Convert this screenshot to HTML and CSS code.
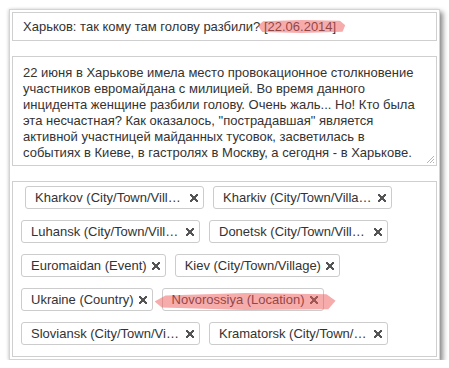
FILE: index.html
```html
<!DOCTYPE html>
<html lang="ru">
<head>
    <meta charset="UTF-8">
    <meta name="viewport" content="width=device-width, initial-scale=1.0">
    <title>Харьков: так кому там голову разбили?</title>
    <link rel="stylesheet" href="styles.css">
</head>
<body>
    <div class="panel">
        <div class="field title-field">
            Харьков: так кому там голову разбили? <span class="marked">[22.06.2014]</span>
        </div>

        <div class="field text-field">
            22 июня в Харькове имела место провокационное столкновение<br>
            участников евромайдана с милицией. Во время данного<br>
            инцидента женщине разбили голову. Очень жаль... Но! Кто была<br>
            эта несчастная? Как оказалось, "пострадавшая" является<br>
            активной участницей майданных тусовок, засветилась в<br>
            событиях в Киеве, в гастролях в Москву, а сегодня - в Харькове.
            <svg class="grip" width="9" height="9" viewBox="0 0 9 9">
                <path d="M8 1 L1 8 M8 4 L4 8 M8 7 L7 8" stroke="#b5b5b5" stroke-width="1"/>
            </svg>
        </div>

        <div class="field tags">
            <div class="tag-row first">
                <span class="tag"><span class="label">Kharkov (City/Town/Village)</span><i class="x"></i></span>
                <span class="tag"><span class="label">Kharkiv (City/Town/Village)</span><i class="x"></i></span>
            </div>
            <div class="tag-row">
                <span class="tag"><span class="label">Luhansk (City/Town/Village)</span><i class="x"></i></span>
                <span class="tag"><span class="label">Donetsk (City/Town/Village)</span><i class="x"></i></span>
            </div>
            <div class="tag-row">
                <span class="tag"><span class="label">Euromaidan (Event)</span><i class="x"></i></span>
                <span class="tag"><span class="label">Kiev (City/Town/Village)</span><i class="x"></i></span>
            </div>
            <div class="tag-row">
                <span class="tag"><span class="label">Ukraine (Country)</span><i class="x"></i></span>
                <span class="tag marked-tag"><span class="label">Novorossiya (Location)</span><i class="x"></i></span>
            </div>
            <div class="tag-row">
                <span class="tag"><span class="label">Sloviansk (City/Town/Village)</span><i class="x"></i></span>
                <span class="tag"><span class="label">Kramatorsk (City/Town/Village)</span><i class="x"></i></span>
            </div>
        </div>
    </div>
</body>
</html>
```

FILE: styles.css
```css
* {
    margin: 0;
    padding: 0;
    box-sizing: border-box;
}

body {
    font-family: 'Liberation Sans', Arial, sans-serif;
    background: #ffffff;
    color: #333333;
}

.panel {
    width: 431px;
    margin: 9px 0 0 9px;
    padding: 2px;
    background: #ffffff;
    border: 1px solid #d4d4d4;
    box-shadow: 3px 3px 5px rgba(0, 0, 0, 0.45), -1px 0 3px rgba(0, 0, 0, 0.12);
    display: flex;
    flex-direction: column;
    gap: 15px;
}

.field {
    border: 1px solid #cfcfcf;
    font-size: 13px;
}

.title-field {
    height: 29px;
    line-height: 27px;
    padding: 0 10px;
    white-space: nowrap;
}

.marked {
    position: relative;
}

.marked::before {
    content: "";
    position: absolute;
    left: -6px;
    right: -9px;
    top: 1px;
    bottom: 1px;
    background: rgba(240, 90, 90, 0.5);
    clip-path: polygon(0 45%, 6% 10%, 50% 0, 94% 5%, 100% 40%, 97% 90%, 50% 100%, 5% 92%);
}

.text-field {
    position: relative;
    height: 110px;
    padding: 8px 4px 8px 10px;
    line-height: 16px;
    white-space: nowrap;
    overflow: hidden;
}

.grip {
    position: absolute;
    right: 1px;
    bottom: 1px;
}

.tags {
    padding: 4px 8px 11px;
    display: flex;
    flex-direction: column;
    gap: 11px;
}

.tag-row {
    display: flex;
    gap: 9px;
}

.tag-row.first {
    padding-left: 4px;
}

.tag {
    position: relative;
    display: inline-flex;
    align-items: center;
    height: 23px;
    padding: 0 5px 0 9px;
    border: 1px solid #cccccc;
    border-radius: 3px;
    white-space: nowrap;
}

.label {
    max-width: 150px;
    overflow: hidden;
    text-overflow: ellipsis;
}

.x {
    display: inline-block;
    width: 8px;
    height: 8px;
    margin-left: 5px;
    background:
        linear-gradient(45deg, transparent 38%, #555 38%, #555 62%, transparent 62%),
        linear-gradient(-45deg, transparent 38%, #555 38%, #555 62%, transparent 62%);
}

.marked-tag::before {
    content: "";
    position: absolute;
    left: -8px;
    right: -13px;
    top: 4px;
    bottom: 0;
    background: rgba(240, 90, 90, 0.5);
    clip-path: polygon(0 50%, 6% 15%, 50% 0, 95% 8%, 100% 45%, 96% 95%, 50% 100%, 4% 85%);
}
```
